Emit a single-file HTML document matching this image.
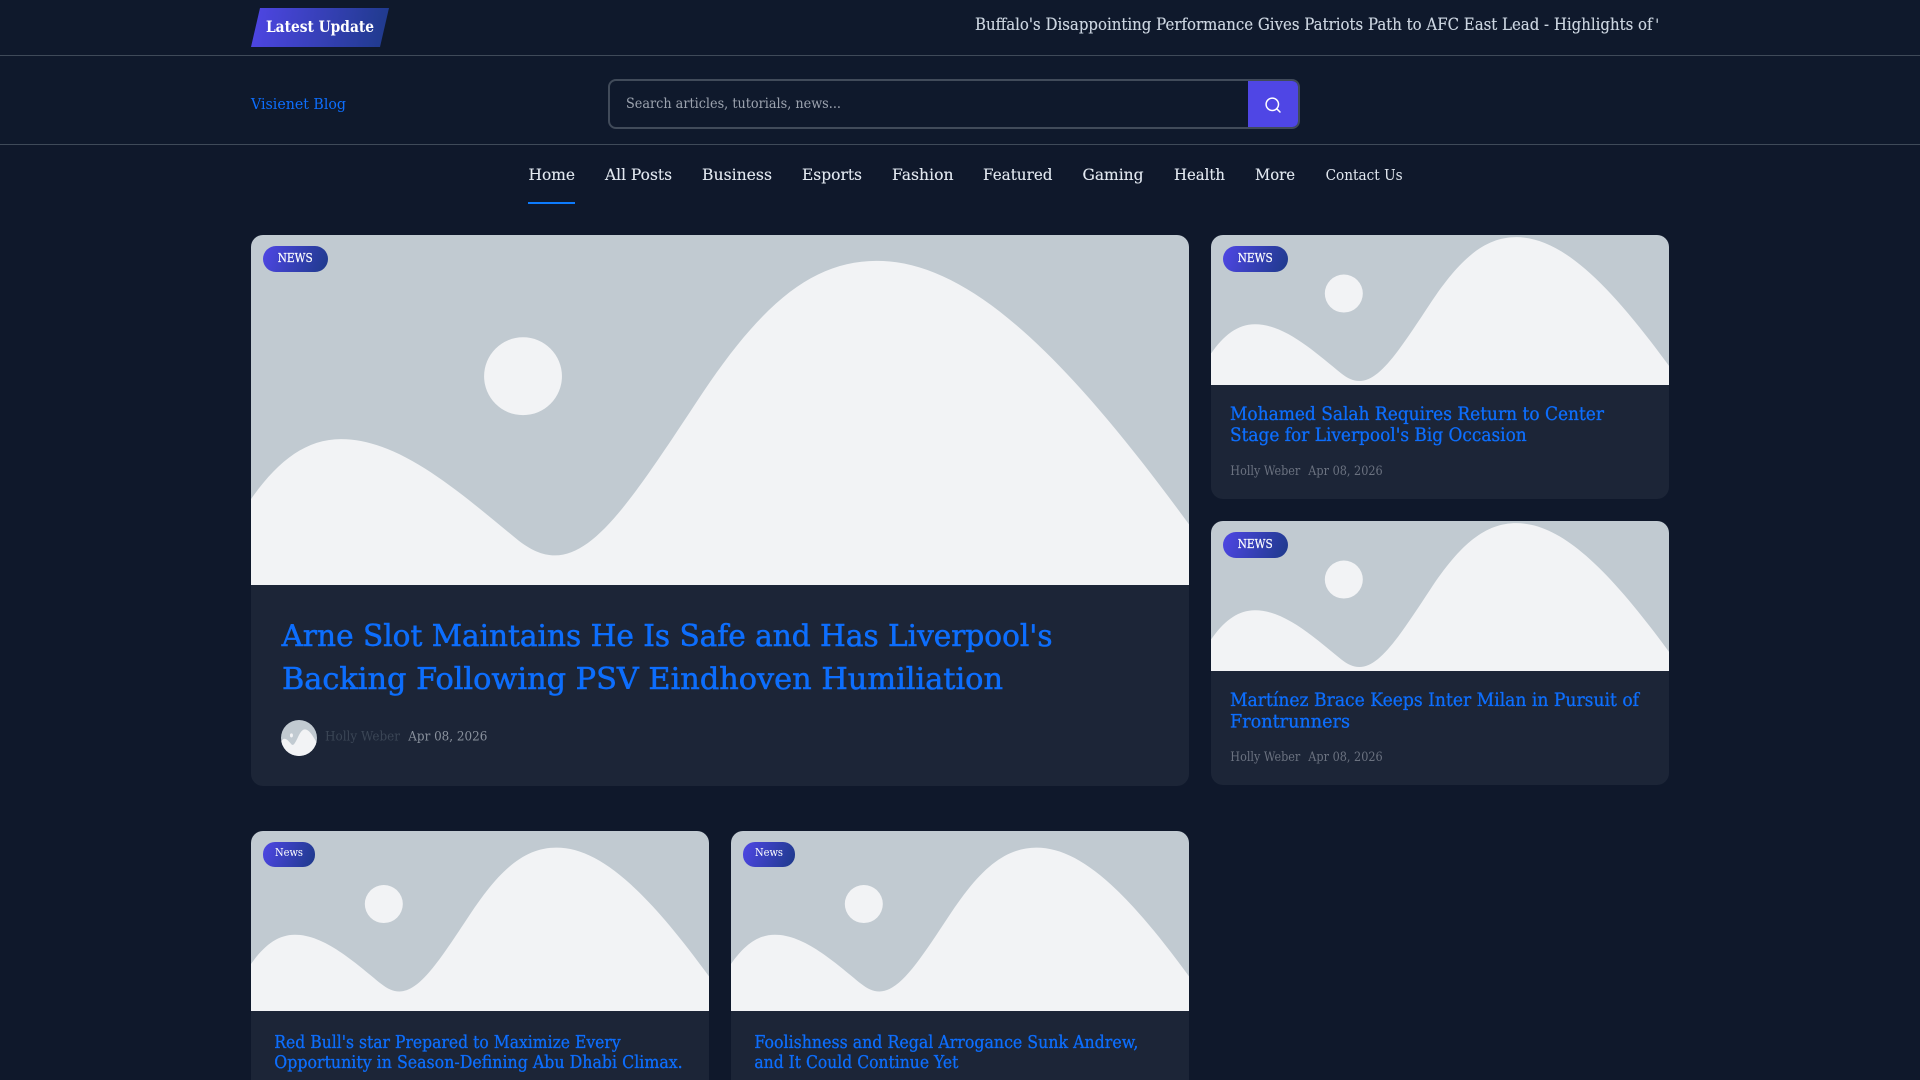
<!DOCTYPE html>
<html lang="en">
<head>
<meta charset="utf-8">
<title>Visienet Blog</title>
<style>
html,body{margin:0;padding:0;width:1920px;height:1080px;overflow:hidden;background:#0f182b}
#page{position:relative;width:1920px;height:1080px;overflow:hidden;background:#0f182b}
.abs{position:absolute}
.hdr{left:0;top:0;width:1920px;height:145px;background:#0f192c}
.line{left:0;width:1920px;height:1px;background:#3f4a59}
.latest{left:251px;top:8px;width:138px;height:39px;background:linear-gradient(100deg,#4f46e5,#1e3a8a);clip-path:polygon(9px 0,100% 0,129px 100%,0 100%)}
.search{left:608px;top:79px;width:688px;height:46px;border:2px solid #414b5a;border-radius:8px}
.sbtn{left:1248px;top:81px;width:50px;height:46px;background:#4f46e5;border-radius:0 6px 6px 0}
.under{left:528px;top:202px;width:47px;height:2px;background:#0d7bfd}
.card{background:#1c2537;border-radius:12px;overflow:hidden}
.card svg{display:block;position:absolute;left:0;top:0}
.badge{background:linear-gradient(110deg,#4f46e5,#1e3a8a);border-radius:13px}
.avatar{left:281px;top:719.5px;width:36px;height:36px;border-radius:50%;overflow:hidden}
#t{position:absolute;left:0;top:0}
#t text{font-family:"DejaVu Serif","Liberation Serif",serif}
.b{fill:#0d6efd}
.h1{stroke:#0d6efd;stroke-width:.55px}
.h2{stroke:#0d6efd;stroke-width:.3px}
.n{stroke:#e2e8f0;stroke-width:.12px}
</style>
</head>
<body>
<div id="page">
<div class="abs hdr"></div>
<div class="abs latest"></div>
<div class="abs line" style="top:55px"></div>
<div class="abs line" style="top:144px"></div>
<div class="abs search"></div>
<div class="abs sbtn"></div>
<svg class="abs" style="left:1262px;top:94px" width="22" height="22" viewBox="0 0 22 22" fill="none" stroke="#fff" stroke-width="1.5"><circle cx="10.3" cy="10.3" r="6.2"/><path d="M14.8 14.8L18 18" stroke-linecap="round"/></svg>
<div class="abs under"></div>

<div class="abs card" style="left:251px;top:235px;width:938px;height:551px">
<svg width="938" height="350" viewBox="0 0 1000 500" preserveAspectRatio="xMidYMid slice"><rect width="1000" height="500" fill="#c1cad1"/><circle cx="290" cy="214" r="41.5" fill="#f2f3f5"/><path fill="#f2f3f5" d="M0 345C28 305 58 281 96 281C160 281 225 340 285 389C298 399 310 405 324 405C368 405 410 340 478 237C545 135 600 91 667 91C760 91 860 180 1000 372V500H0Z"/></svg>
</div>
<div class="abs card" style="left:1211px;top:235px;width:458px;height:264px">
<svg width="458" height="150" viewBox="0 0 1000 500" preserveAspectRatio="xMidYMid slice"><rect width="1000" height="500" fill="#c1cad1"/><circle cx="290" cy="214" r="41.5" fill="#f2f3f5"/><path fill="#f2f3f5" d="M0 345C28 305 58 281 96 281C160 281 225 340 285 389C298 399 310 405 324 405C368 405 410 340 478 237C545 135 600 91 667 91C760 91 860 180 1000 372V500H0Z"/></svg>
</div>
<div class="abs card" style="left:1211px;top:521px;width:458px;height:264px">
<svg width="458" height="150" viewBox="0 0 1000 500" preserveAspectRatio="xMidYMid slice"><rect width="1000" height="500" fill="#c1cad1"/><circle cx="290" cy="214" r="41.5" fill="#f2f3f5"/><path fill="#f2f3f5" d="M0 345C28 305 58 281 96 281C160 281 225 340 285 389C298 399 310 405 324 405C368 405 410 340 478 237C545 135 600 91 667 91C760 91 860 180 1000 372V500H0Z"/></svg>
</div>
<div class="abs card" style="left:251px;top:831px;width:458px;height:300px">
<svg style="top:-1px" width="458" height="181" viewBox="0 0 1000 500" preserveAspectRatio="xMidYMid slice"><rect width="1000" height="500" fill="#c1cad1"/><circle cx="290" cy="214" r="41.5" fill="#f2f3f5"/><path fill="#f2f3f5" d="M0 345C28 305 58 281 96 281C160 281 225 340 285 389C298 399 310 405 324 405C368 405 410 340 478 237C545 135 600 91 667 91C760 91 860 180 1000 372V500H0Z"/></svg>
</div>
<div class="abs card" style="left:731px;top:831px;width:458px;height:300px">
<svg style="top:-1px" width="458" height="181" viewBox="0 0 1000 500" preserveAspectRatio="xMidYMid slice"><rect width="1000" height="500" fill="#c1cad1"/><circle cx="290" cy="214" r="41.5" fill="#f2f3f5"/><path fill="#f2f3f5" d="M0 345C28 305 58 281 96 281C160 281 225 340 285 389C298 399 310 405 324 405C368 405 410 340 478 237C545 135 600 91 667 91C760 91 860 180 1000 372V500H0Z"/></svg>
</div>

<div class="abs badge" style="left:263px;top:246px;width:65px;height:26px"></div>
<div class="abs badge" style="left:1223px;top:246px;width:65px;height:26px"></div>
<div class="abs badge" style="left:1223px;top:532px;width:65px;height:26px"></div>
<div class="abs badge" style="left:263px;top:842px;width:52px;height:25px;border-radius:12px"></div>
<div class="abs badge" style="left:743px;top:842px;width:52px;height:25px;border-radius:12px"></div>

<div class="abs avatar">
<svg width="36" height="36" viewBox="0 -99 1000 730" preserveAspectRatio="none" style="display:block"><rect y="-99" width="1000" height="730" fill="#c1cad1"/><ellipse cx="290" cy="214" rx="41.5" ry="41.5" fill="#f2f3f5"/><path fill="#f2f3f5" d="M0 345C28 305 58 281 96 281C160 281 225 340 285 389C298 399 310 405 324 405C368 405 410 340 478 237C545 135 600 91 667 91C760 91 860 180 1000 372V700H0Z"/></svg>
</div>

<svg id="t" width="1920" height="1080" viewBox="0 0 1920 1080">
<text x="266" y="32" font-size="16" font-weight="bold" fill="#fff" textLength="108" lengthAdjust="spacingAndGlyphs">Latest Update</text>
<text x="975" y="30" font-size="16.5" fill="#cbd5e1" class="n" textLength="677.6" lengthAdjust="spacingAndGlyphs">Buffalo's Disappointing Performance Gives Patriots Path to AFC East Lead - Highlights of</text>
<text x="1655" y="30" font-size="16" fill="#cbd5e1">'</text>

<text x="251" y="109" font-size="14.5" class="b" textLength="95" lengthAdjust="spacingAndGlyphs">Visienet Blog</text>
<text x="626" y="108" font-size="14" fill="#9ca3af" textLength="215" lengthAdjust="spacingAndGlyphs">Search articles, tutorials, news...</text>

<text x="528.5" y="180" font-size="16" fill="#e2e8f0" class="n" textLength="46.5" lengthAdjust="spacingAndGlyphs">Home</text>
<text x="605" y="180" font-size="16" fill="#e2e8f0" class="n" textLength="67" lengthAdjust="spacingAndGlyphs">All Posts</text>
<text x="702" y="180" font-size="16" fill="#e2e8f0" class="n" textLength="70" lengthAdjust="spacingAndGlyphs">Business</text>
<text x="802" y="180" font-size="16" fill="#e2e8f0" class="n" textLength="60" lengthAdjust="spacingAndGlyphs">Esports</text>
<text x="892" y="180" font-size="16" fill="#e2e8f0" class="n" textLength="61.5" lengthAdjust="spacingAndGlyphs">Fashion</text>
<text x="983" y="180" font-size="16" fill="#e2e8f0" class="n" textLength="69.5" lengthAdjust="spacingAndGlyphs">Featured</text>
<text x="1082.5" y="180" font-size="16" fill="#e2e8f0" class="n" textLength="61" lengthAdjust="spacingAndGlyphs">Gaming</text>
<text x="1174" y="180" font-size="16" fill="#e2e8f0" class="n" textLength="51" lengthAdjust="spacingAndGlyphs">Health</text>
<text x="1255" y="180" font-size="16" fill="#e2e8f0" class="n" textLength="40" lengthAdjust="spacingAndGlyphs">More</text>
<text x="1325.6" y="180" font-size="14.5" fill="#e2e8f0" textLength="77" lengthAdjust="spacingAndGlyphs">Contact Us</text>

<text x="277.7" y="262" font-size="12" fill="#fff" stroke="#fff" stroke-width=".2" textLength="35" lengthAdjust="spacingAndGlyphs">NEWS</text>
<text x="1237.7" y="262" font-size="12" fill="#fff" stroke="#fff" stroke-width=".2" textLength="35" lengthAdjust="spacingAndGlyphs">NEWS</text>
<text x="1237.7" y="548" font-size="12" fill="#fff" stroke="#fff" stroke-width=".2" textLength="35" lengthAdjust="spacingAndGlyphs">NEWS</text>
<text x="275" y="856" font-size="11.5" fill="#fff" textLength="28" lengthAdjust="spacingAndGlyphs">News</text>
<text x="755" y="856" font-size="11.5" fill="#fff" textLength="28" lengthAdjust="spacingAndGlyphs">News</text>

<text x="281.6" y="646" font-size="30" class="b h1" textLength="771" lengthAdjust="spacingAndGlyphs">Arne Slot Maintains He Is Safe and Has Liverpool's</text>
<text x="282" y="689" font-size="30" class="b h1" textLength="721" lengthAdjust="spacingAndGlyphs">Backing Following PSV Eindhoven Humiliation</text>
<text x="325" y="740.5" font-size="13" fill="#3b4656" textLength="75" lengthAdjust="spacingAndGlyphs">Holly Weber</text>
<text x="408.3" y="740.5" font-size="13" fill="#8a929e" textLength="79" lengthAdjust="spacingAndGlyphs">Apr 08, 2026</text>

<text x="1230" y="420" font-size="19" class="b h2" textLength="374" lengthAdjust="spacingAndGlyphs">Mohamed Salah Requires Return to Center</text>
<text x="1230" y="441" font-size="19" class="b h2" textLength="296.7" lengthAdjust="spacingAndGlyphs">Stage for Liverpool's Big Occasion</text>
<text x="1230.3" y="475" font-size="13" fill="#6b7280" textLength="70" lengthAdjust="spacingAndGlyphs">Holly Weber</text>
<text x="1308.3" y="475" font-size="13" fill="#6b7280" textLength="74.4" lengthAdjust="spacingAndGlyphs">Apr 08, 2026</text>

<text x="1230" y="706" font-size="19" class="b h2" textLength="409" lengthAdjust="spacingAndGlyphs">Martínez Brace Keeps Inter Milan in Pursuit of</text>
<text x="1230" y="727.5" font-size="19" class="b h2" textLength="120" lengthAdjust="spacingAndGlyphs">Frontrunners</text>
<text x="1230.3" y="761" font-size="13" fill="#6b7280" textLength="70" lengthAdjust="spacingAndGlyphs">Holly Weber</text>
<text x="1308.3" y="761" font-size="13" fill="#6b7280" textLength="74.4" lengthAdjust="spacingAndGlyphs">Apr 08, 2026</text>

<text x="274.3" y="1048" font-size="18" class="b h2" textLength="346.4" lengthAdjust="spacingAndGlyphs">Red Bull's star Prepared to Maximize Every</text>
<text x="274.3" y="1068" font-size="18" class="b h2" textLength="408.4" lengthAdjust="spacingAndGlyphs">Opportunity in Season-Defining Abu Dhabi Climax.</text>
<text x="754.4" y="1048" font-size="18" class="b h2" textLength="384" lengthAdjust="spacingAndGlyphs">Foolishness and Regal Arrogance Sunk Andrew,</text>
<text x="754.4" y="1068" font-size="18" class="b h2" textLength="204" lengthAdjust="spacingAndGlyphs">and It Could Continue Yet</text>
</svg>
</div>
</body>
</html>
